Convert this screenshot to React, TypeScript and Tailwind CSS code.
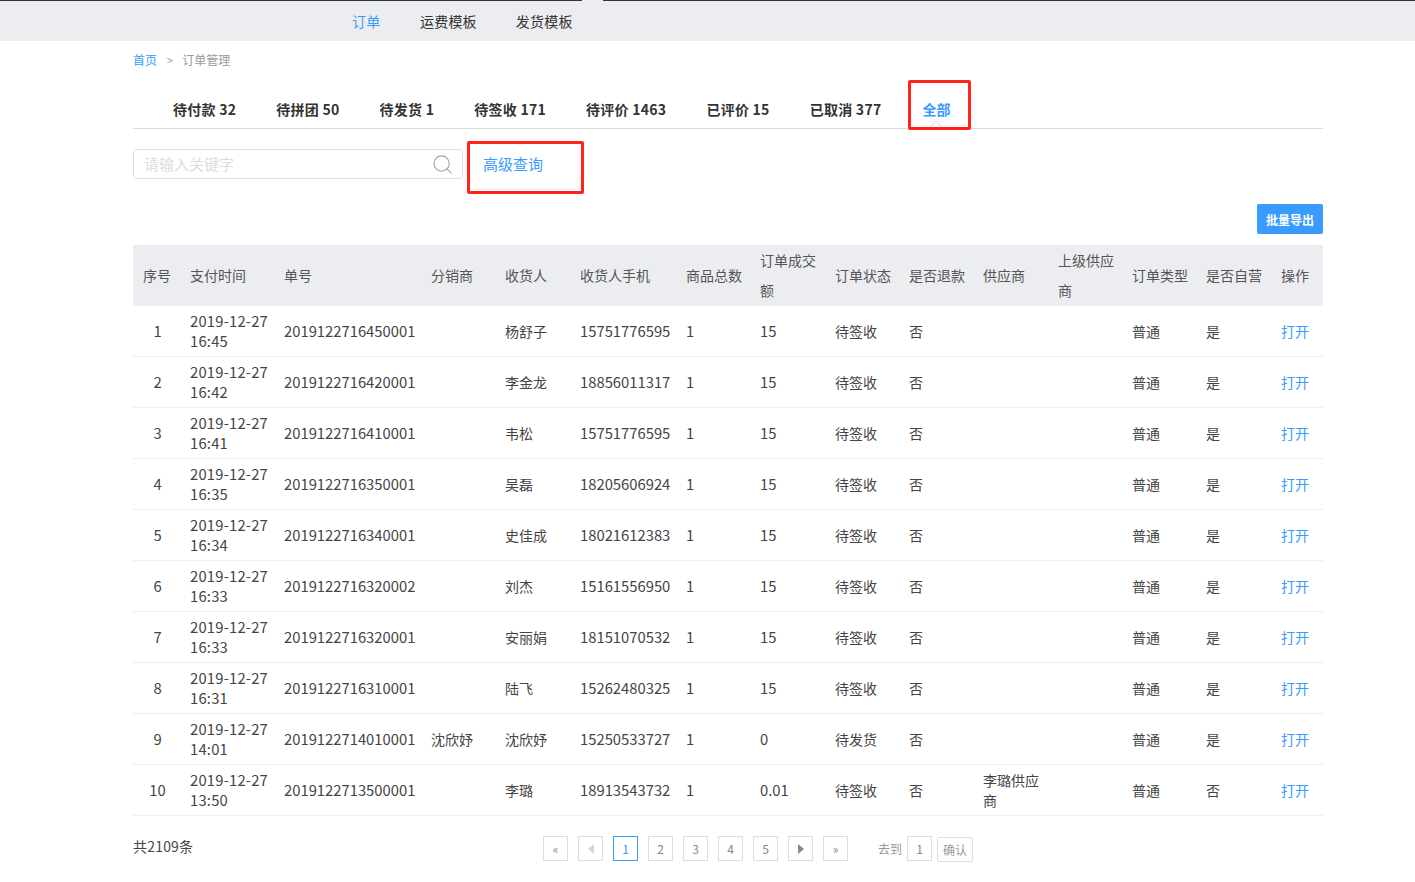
import { Search } from "lucide-react";

const F = "font-['Noto_Sans_CJK_SC','Noto_Sans',sans-serif]";

const tabs = ["待付款 32", "待拼团 50", "待发货 1", "待签收 171", "待评价 1463", "已评价 15", "已取消 377"];
const widths = [49, 94, 147, 74, 75, 106, 74, 75, 74, 74, 75, 74, 74, 75, 50];
const heads = ["序号", "支付时间", "单号", "分销商", "收货人", "收货人手机", "商品总数", "订单成交额", "订单状态", "是否退款", "供应商", "上级供应商", "订单类型", "是否自营", "操作"];

const rows = [
  ["16:45", "2019122716450001", "", "杨舒子", "15751776595", "15", "待签收", "", "是"],
  ["16:42", "2019122716420001", "", "李金龙", "18856011317", "15", "待签收", "", "是"],
  ["16:41", "2019122716410001", "", "韦松", "15751776595", "15", "待签收", "", "是"],
  ["16:35", "2019122716350001", "", "吴磊", "18205606924", "15", "待签收", "", "是"],
  ["16:34", "2019122716340001", "", "史佳成", "18021612383", "15", "待签收", "", "是"],
  ["16:33", "2019122716320002", "", "刘杰", "15161556950", "15", "待签收", "", "是"],
  ["16:33", "2019122716320001", "", "安丽娟", "18151070532", "15", "待签收", "", "是"],
  ["16:31", "2019122716310001", "", "陆飞", "15262480325", "15", "待签收", "", "是"],
  ["14:01", "2019122714010001", "沈欣妤", "沈欣妤", "15250533727", "0", "待发货", "", "是"],
  ["13:50", "2019122713500001", "", "李璐", "18913543732", "0.01", "待签收", "李璐供应商", "否"],
];

const base = "px-2 py-0 align-middle border-b border-[#eeeeee] leading-5";
const cell = `${base} text-[14px] text-[#444444] break-all`;
const num = `${base} text-[14.8px] text-[#444444] whitespace-nowrap`;

function PageBox({ children, active }: { children: React.ReactNode; active?: boolean }) {
  return (
    <span className={`flex h-[25px] w-[25px] items-center justify-center border text-[12px] ${active ? "border-[#3a9bff] text-[#3a9bff]" : "border-[#dddddd] text-[#888888]"}`}>
      {children}
    </span>
  );
}

export default function App() {
  return (
    <div className={`${F} relative h-[882px] overflow-hidden bg-white`}>
      <div className="flex h-[41px] items-start border-t border-[#333333] bg-[#ecedf1] pl-[352px]">
        <nav className="flex gap-[39px] pt-[10px] text-[14px] leading-5 tracking-[0.2px] text-[#333333]">
          <span className="w-[29px] text-[#3a9bff]">订单</span>
          <span>运费模板</span>
          <span>发货模板</span>
        </nav>
      </div>
      <div className="absolute left-[582px] top-0 h-px w-[21px] bg-[#ecedf1]" />

      <main className="ml-[133px] w-[1190px]">
        <div className="flex h-[38px] items-center text-[12px] text-[#999999]">
          <span className="text-[#3a9bff]">首页</span>
          <span className="ml-[10px] mr-[9px] text-[11px]">&gt;</span>
          <span>订单管理</span>
        </div>

        <div className="flex h-[50px] items-start border-b border-[#dddddd] pl-[20px] pt-[20px] text-[14px] font-bold leading-5 text-[#333333]">
          {tabs.map((t) => (
            <span key={t} className="px-5 tracking-[0.26px]">{t}</span>
          ))}
          <span className="relative ml-[1px] h-[29px] px-5 text-[#3a9bff]">
            全部
            <svg className="absolute bottom-[1px] left-[28px]" width="12" height="7" viewBox="0 0 12 7">
              <path d="M0 7L6 1l6 6" fill="#ffffff" stroke="#d8d8d8" />
            </svg>
          </span>
        </div>

        <div className="mt-[20px] flex items-center">
          <div className="flex h-[30px] w-[330px] items-center justify-between rounded-[3px] border border-[#dddddd] pl-[10px] pr-[8px] text-[15px] text-[#dddddd]">
            <span>请输入关键字</span>
            <Search size={23} strokeWidth={1.1} color="#a0a0a0" />
          </div>
          <span className="ml-[20px] text-[15px] text-[#3a9bff]">高级查询</span>
        </div>

        <div className="mt-[25px] flex justify-end">
          <button className="h-[30px] w-[66px] rounded-[2px] bg-[#3a9bff] pt-[1px] text-[12px] font-bold text-white">批量导出</button>
        </div>

        <table className="mt-[11px] w-[1190px] table-fixed border-separate border-spacing-0">
          <colgroup>
            {widths.map((w, i) => (
              <col key={i} style={{ width: w }} />
            ))}
          </colgroup>
          <thead>
            <tr className="h-[61px] bg-[#ecedf1]">
              {heads.map((h, i) => (
                <th key={h} className={`px-2 pb-[1px] text-left align-middle text-[14px] font-normal leading-[30px] text-[#555555] break-all ${i === 0 ? "pl-[10px]" : ""}`}>
                  {h}
                </th>
              ))}
            </tr>
          </thead>
          <tbody>
            {rows.map((r, i) => (
              <tr key={i} className="h-[51px]">
                <td className={`${num} text-center`}>{i + 1}</td>
                <td className={`${num} tracking-[0.2px]`}>2019-12-27<br />{r[0]}</td>
                <td className={num}>{r[1]}</td>
                <td className={cell}>{r[2]}</td>
                <td className={cell}>{r[3]}</td>
                <td className={num}>{r[4]}</td>
                <td className={num}>1</td>
                <td className={num}>{r[5]}</td>
                <td className={cell}>{r[6]}</td>
                <td className={cell}>否</td>
                <td className={cell}>{r[7]}</td>
                <td className={cell}></td>
                <td className={cell}>普通</td>
                <td className={cell}>{r[8]}</td>
                <td className={`${base} text-[14px] text-[#3a9bff]`}>打开</td>
              </tr>
            ))}
          </tbody>
        </table>

        <div className="mt-[20px] flex h-[26px] items-start">
          <span className="w-[410px] text-[14px] leading-5 tracking-[0.2px] text-[#444444]">共2109条</span>
          <div className="flex items-center gap-[10px]">
            <PageBox>«</PageBox>
            <PageBox>
              <svg width="8" height="12" viewBox="0 0 8 12"><path d="M7 1v10L1 6z" fill="#d5d5d5" /></svg>
            </PageBox>
            <PageBox active>1</PageBox>
            <PageBox>2</PageBox>
            <PageBox>3</PageBox>
            <PageBox>4</PageBox>
            <PageBox>5</PageBox>
            <PageBox>
              <svg width="8" height="12" viewBox="0 0 8 12"><path d="M1 1v10l6-5z" fill="#888888" /></svg>
            </PageBox>
            <PageBox>»</PageBox>
          </div>
          <span className="ml-[30px] mr-[5px] pt-[4px] text-[12px] text-[#999999]">去到</span>
          <PageBox>1</PageBox>
          <span className="ml-[5px] mt-[1px] flex h-[25px] w-[36px] items-center justify-center rounded-[2px] border border-[#dddddd] text-[12px] text-[#999999]">确认</span>
        </div>
      </main>

      <div className="pointer-events-none absolute left-[908px] top-[80px] h-[50px] w-[63px] rounded-[2px] border-[3px] border-[#ff2318]" />
      <div className="pointer-events-none absolute left-[467px] top-[141px] h-[53px] w-[117px] rounded-[2px] border-[3px] border-[#ff2318]" />
    </div>
  );
}
